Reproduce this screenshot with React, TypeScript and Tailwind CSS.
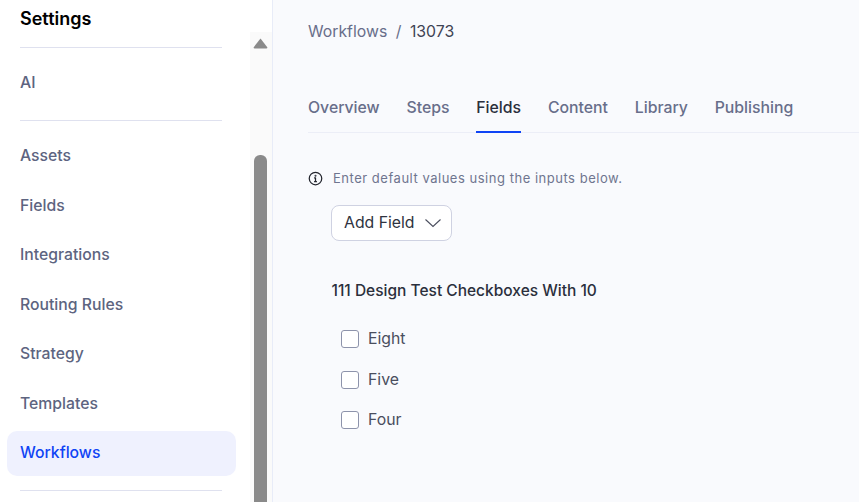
import React from "react";

const items = ["Assets", "Fields", "Integrations", "Routing Rules", "Strategy", "Templates"];
const tabs = ["Overview", "Steps", "Fields", "Content", "Library", "Publishing"];
const options = ["Eight", "Five", "Four"];

export default function App() {
  return (
    <div className="flex h-[502px] w-[859px] overflow-hidden bg-white font-['Inter',sans-serif]">
      <aside className="flex w-[273px] shrink-0 border-r border-[#e8ecf8] bg-white">
        <div className="w-[250px] shrink-0">
          <div className="ml-5 mr-[28px] h-[48px] border-b border-[#dfe1ef] pt-[7px] text-[18px] font-semibold leading-6 text-black">Settings</div>
          <div className="ml-5 mr-[28px] flex h-[73px] items-center border-b border-[#dfe1ef] pb-[3px] text-[15.8px] font-medium text-[#5d6480]">AI</div>
          <nav className="mt-[12.5px] flex flex-col gap-[4.5px] pl-[7px] pr-[14px]">
            {items.map((t) => (
              <div key={t} className="flex h-[45px] items-center pl-[13px] text-[15.75px] font-medium text-[#5d6480]">{t}</div>
            ))}
            <div className="flex h-[45px] items-center rounded-[10px] bg-[#eff1fe] pl-[13px] text-[15.75px] font-medium text-[#0f44f5]">Workflows</div>
          </nav>
          <div className="ml-5 mr-[28px] mt-[14px] border-b border-[#dfe1ef]" />
        </div>
        <div className="mt-[32px] flex w-[22px] flex-col items-center bg-[#fafafa] pr-[1px]">
          <svg className="mt-[6px]" width="15" height="11" viewBox="0 0 15 11"><path d="M7.5 0.5 L14.5 9.5 Q15 11 13.5 11 L1.5 11 Q0 11 0.5 9.5 Z" fill="#8a8a8a" /></svg>
          <div className="mt-[106px] h-[360px] w-[13px] rounded-t-[6px] bg-[#8a8a8a]" />
        </div>
      </aside>
      <main className="min-w-0 flex-1 bg-[#f9fafd] pl-[35px]">
        <div className="flex h-[63px] items-center gap-[8.5px] text-[15.8px] font-normal">
          <span className="text-[#686e8a]">Workflows</span>
          <span className="text-[#686e8a]">/</span>
          <span className="text-[#3f4354]">13073</span>
        </div>
        <div className="mt-[21px] flex h-[49px] gap-[26.8px] border-b border-[#eceef7] text-[15.8px] font-medium text-[#686e8a]">
          {tabs.map((t) => (
            <div key={t} className={t === "Fields" ? "-mb-px flex h-[49px] items-center border-b-2 border-[#0f44f5] text-[#2b2f3c]" : "flex h-[48px] items-center"}>{t}</div>
          ))}
        </div>
        <div className="mt-[37px] flex h-[18px] items-center gap-[10px] text-[13px] tracking-[0.52px] text-[#6f758f]">
          <svg className="-mt-[1px]" width="15" height="15" viewBox="0 0 24 24" fill="none" stroke="#23252e" strokeWidth="2" strokeLinecap="round">
            <circle cx="12" cy="12" r="10" />
            <path d="M12 11v6M10.5 17h3M10.5 11H12" />
            <circle cx="12" cy="7.5" r="0.6" />
          </svg>
          <span>Enter default values using the inputs below.</span>
        </div>
        <button className="ml-[23px] mt-[17px] flex h-[36px] w-[121px] items-center gap-[9px] rounded-[8px] border border-[#cfd2e2] bg-white pl-[12px] text-[15.8px] font-normal text-[#2f3340]">
          <span>Add Field</span>
          <svg width="18" height="10" viewBox="0 0 18 10" fill="none" stroke="#4a4e5e" strokeWidth="1.1"><path d="M1.5 1.5 L9 8.5 L16.5 1.5" /></svg>
        </button>
        <div className="ml-[23.5px] mt-[40px] text-[15.5px] font-[450] leading-5 text-[#2b2f3c]">111 Design Test Checkboxes With 10</div>
        <div className="ml-[33px] mt-[28px] flex flex-col gap-[20.5px]">
          {options.map((o) => (
            <label key={o} className="flex h-[20px] items-center gap-[9px] text-[15.8px] text-[#4a4e5e]">
              <span className="h-[18px] w-[18px] rounded-[3px] border border-[#8d93ab] bg-white" />
              {o}
            </label>
          ))}
        </div>
      </main>
    </div>
  );
}
